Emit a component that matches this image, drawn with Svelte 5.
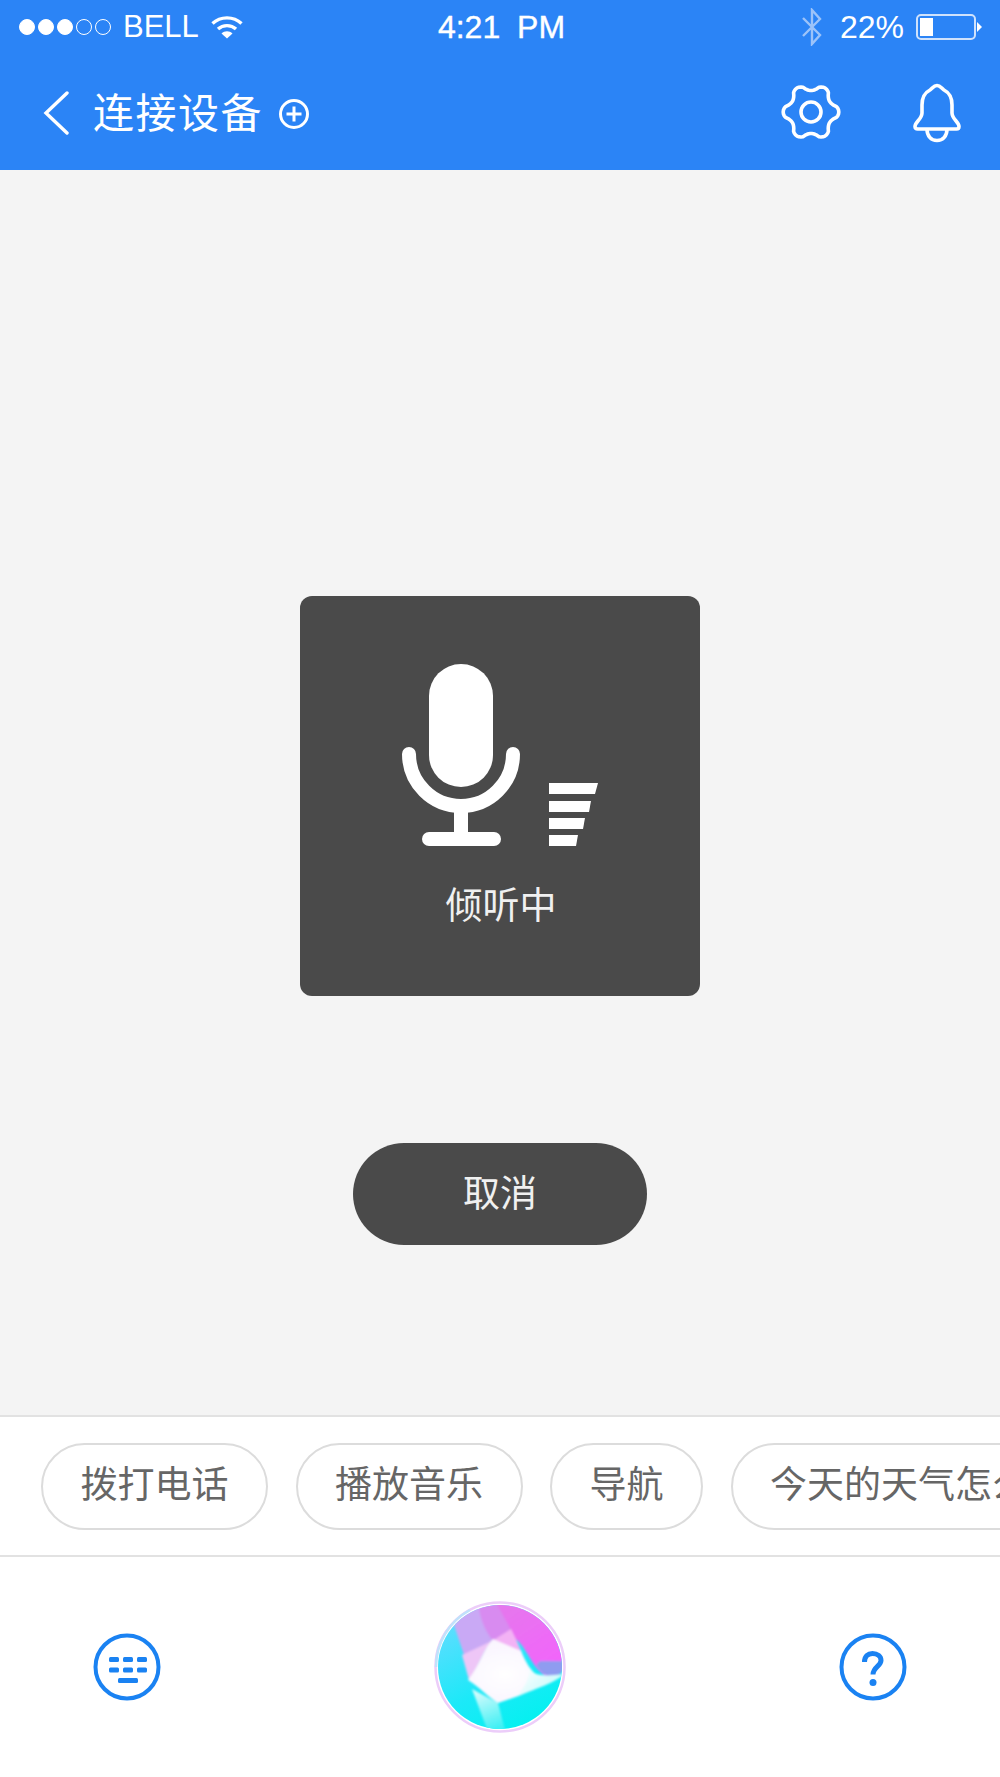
<script>
  const chips = ["拨打电话", "播放音乐", "导航", "今天的天气怎么样"];
  const dots = [1, 1, 1, 0, 0];

  // six rounded teeth: radius swings between the lobes and the notches
  function gearOutline(cx, cy, mean, swing) {
    const pts = [];
    for (let deg = 0; deg < 360; deg += 4) {
      const a = (deg * Math.PI) / 180;
      const wave = Math.cos(6 * a);
      const shaped = Math.sign(wave) * Math.pow(Math.abs(wave), 0.7);
      const r = mean + swing * shaped;
      pts.push(`${(cx + r * Math.cos(a)).toFixed(2)} ${(cy + r * Math.sin(a)).toFixed(2)}`);
    }
    return "M" + pts.join("L") + "Z";
  }
  const gearPath = gearOutline(30, 30, 24.6, 3.2);
</script>

<div class="phone">
  <header class="top">
    <div class="status">
      <div class="status-left">
        <div class="signal">
          {#each dots as on}
            <i class="dot" class:on></i>
          {/each}
        </div>
        <span class="carrier">BELL</span>
        <svg class="wifi" width="32" height="24" viewBox="0 0 32 24" fill="none" stroke="#fff" stroke-width="3.4">
          <path d="M1.5 8.5C9.5 1 22.5 1 30.5 8.5" />
          <path d="M7 14C12 9.5 20 9.5 25 14" />
          <path d="M16 23.5L10.5 18.5C13.5 15.6 18.5 15.6 21.5 18.5Z" fill="#fff" stroke="none" />
        </svg>
      </div>
      <div class="clock">4:21 PM</div>
      <div class="status-right">
        <svg class="bt" width="22" height="38" viewBox="0 0 22 38" fill="none" stroke="#9cc3f9" stroke-width="2.4">
          <path d="M2 10L19 27L11 36V2L19 11L2 28" />
        </svg>
        <span class="pct">22%</span>
        <div class="battery"><i></i></div>
        <i class="nub"></i>
      </div>
    </div>
    <div class="nav">
      <svg class="back" width="26" height="44" viewBox="0 0 26 44" fill="none" stroke="#fff" stroke-width="3.4" stroke-linecap="round">
        <path d="M24 2L3 22L24 42" />
      </svg>
      <span class="title">连接设备</span>
      <svg class="plus" width="32" height="32" viewBox="0 0 32 32" fill="none" stroke="#fff" stroke-width="3">
        <circle cx="16" cy="16" r="13.5" />
        <path d="M8.5 16H23.5M16 8.5V23.5" />
      </svg>
      <svg class="gear" width="60" height="60" viewBox="0 0 60 60" fill="none" stroke="#fff" stroke-width="3.6" stroke-linejoin="round">
        <path d={gearPath} />
        <circle cx="30" cy="30" r="10" />
      </svg>
      <svg class="bell" width="48" height="60" viewBox="0 0 48 60" fill="none" stroke="#fff" stroke-width="3.6" stroke-linejoin="round">
        <path d="M24 2.5C27.5 2.5 28.5 5.5 31 7C36 9.5 39 14.5 39 22V30C39 36 46 39 46 43.5C46 45.5 45 46 43.5 46H4.5C3 46 2 45.5 2 43.5C2 39 9 36 9 30V22C9 14.5 12 9.5 17 7C19.5 5.5 20.5 2.5 24 2.5Z" />
        <path d="M14 46C14 53 18 57.5 24 57.5C30 57.5 34 53 34 46" />
      </svg>
    </div>
  </header>

  <main class="content">
    <section class="listening">
      <div class="graphic">
        <svg width="196" height="182" viewBox="0 0 196 182" fill="none">
          <rect x="27" y="0" width="64" height="123" rx="32" fill="#fff" />
          <path d="M7 90A52 52 0 0 0 111 90" stroke="#fff" stroke-width="14" stroke-linecap="round" />
          <path d="M59 142V176" stroke="#fff" stroke-width="14" />
          <rect x="20" y="168" width="79" height="14" rx="7" fill="#fff" />
          <path d="M147 119H196L193 130H147Z" fill="#fff" />
          <path d="M147 137H189L187 148H147Z" fill="#fff" />
          <path d="M147 154H183L181 165H147Z" fill="#fff" />
          <path d="M147 171H176L174 182H147Z" fill="#fff" />
        </svg>
      </div>
      <p>倾听中</p>
    </section>
    <button class="cancel">取消</button>
  </main>

  <div class="chips">
    {#each chips as chip}
      <span class="chip">{chip}</span>
    {/each}
  </div>

  <footer class="dock">
    <svg width="68" height="68" viewBox="0 0 68 68" fill="none">
      <circle cx="34" cy="34" r="31.5" stroke="#1a82f2" stroke-width="4" />
      <g fill="#1a82f2">
        <rect x="16" y="24" width="10" height="5" rx="1.5" />
        <rect x="30" y="24" width="10" height="5" rx="1.5" />
        <rect x="44" y="24" width="10" height="5" rx="1.5" />
        <rect x="16" y="34.5" width="10" height="5" rx="1.5" />
        <rect x="30" y="34.5" width="10" height="5" rx="1.5" />
        <rect x="44" y="34.5" width="10" height="5" rx="1.5" />
        <rect x="25" y="45" width="20" height="5" rx="1.5" />
      </g>
    </svg>

    <svg class="orb" width="134" height="134" viewBox="33 21 134 134" fill="none">
      <defs>
        <clipPath id="orb-clip"><circle cx="100" cy="88" r="62" /></clipPath>
        <filter id="orb-soft" x="-5%" y="-5%" width="110%" height="110%">
          <feGaussianBlur stdDeviation="1.2" />
        </filter>
        <linearGradient id="orb-base" x1="0.2" y1="0.1" x2="0.7" y2="1">
          <stop offset="0" stop-color="#62dcff" />
          <stop offset="0.55" stop-color="#1ce9f8" />
          <stop offset="1" stop-color="#00f2ee" />
        </linearGradient>
        <linearGradient id="orb-pink" x1="0.1" y1="0" x2="0.8" y2="0.9">
          <stop offset="0" stop-color="#e27bea" />
          <stop offset="1" stop-color="#f264fb" />
        </linearGradient>
        <linearGradient id="orb-mist" x1="0" y1="0" x2="0.3" y2="1">
          <stop offset="0" stop-color="#e4fcfd" />
          <stop offset="1" stop-color="#3ff0f4" />
        </linearGradient>
        <linearGradient id="orb-fade" x1="0" y1="0" x2="1" y2="0.6">
          <stop offset="0" stop-color="#fff" />
          <stop offset="1" stop-color="#c4fafb" />
        </linearGradient>
        <radialGradient id="orb-white" cx="0.4" cy="0.55" r="0.7">
          <stop offset="0" stop-color="#fff" />
          <stop offset="1" stop-color="#f8f1fe" />
        </radialGradient>
      </defs>
      <circle cx="100" cy="88" r="64.5" stroke="#eccdf9" stroke-width="2.5" />
      <path d="M70 31A64.5 64.5 0 0 0 36 88" stroke="#bfe3fb" stroke-width="2.5" />
      <g clip-path="url(#orb-clip)">
        <rect x="30" y="20" width="140" height="140" fill="url(#orb-base)" />
        <g filter="url(#orb-soft)">
          <path d="M72 110L98 124L106 155L87 150Z" fill="url(#orb-mist)" />
          <path d="M76 18C90 30 102 50 118 62C128 72 133 90 146 97C154 100 162 92 170 82V18Z" fill="url(#orb-pink)" />
          <path d="M136 86C142 96 150 100 158 96C162 94 165 90 170 82L140 82Z" fill="#8f9cf0" />
          <path d="M54 46L64 76L94 62L80 26L70 24Z" fill="#c9a9f5" />
          <path d="M78 22H95C101 32 106 42 111 51L93 62C85 52 79 38 78 22Z" fill="#d88bf0" />
          <path d="M92 62L111 50C114 56 118 64 122 74Z" fill="#f3b2f5" />
          <path d="M62 76L94 61C84 68 80 86 69 101Z" fill="#eec6f7" />
          <path d="M93 60L121 72C126 84 131 92 138 97L160 97C140 109 120 117 98 124C88 118 78 107 68 101C80 86 84 69 93 60Z" fill="url(#orb-white)" />
          <path d="M129 90C134 96 142 98 165 95C152 105 138 109 118 116C126 106 130 98 129 90Z" fill="url(#orb-fade)" />
        </g>
      </g>
    </svg>

    <svg width="68" height="68" viewBox="0 0 68 68" fill="none">
      <circle cx="34" cy="34" r="31.5" stroke="#1a82f2" stroke-width="4" />
      <path d="M25.5 29C25.5 23 29 20.5 33.5 20.5C38.5 20.5 42 23.5 42 27.5C42 33 34 34 34 41.5" stroke="#1a82f2" stroke-width="5" />
      <circle cx="34" cy="49.5" r="3.5" fill="#1a82f2" />
    </svg>
  </footer>
</div>

<style>
  :global(body) {
    background: #fff;
  }
  .phone {
    width: 1000px;
    height: 1777px;
    display: flex;
    flex-direction: column;
    overflow: hidden;
    font-family: "Liberation Sans", "Noto Sans CJK SC", sans-serif;
  }
  .top {
    height: 170px;
    background: #2b84f6;
    color: #fff;
    flex: none;
  }
  .status {
    height: 54px;
    display: grid;
    grid-template-columns: 1fr auto 1fr;
    align-items: center;
    padding: 0 16px 0 19px;
    font-size: 31px;
  }
  .status-left,
  .status-right {
    display: flex;
    align-items: center;
  }
  .status-right {
    justify-content: flex-end;
    padding-right: 2px;
  }
  .signal {
    display: flex;
    gap: 3px;
  }
  .dot {
    width: 16px;
    height: 16px;
    box-sizing: border-box;
    border-radius: 50%;
    border: 1.5px solid #fff;
  }
  .dot.on {
    background: #fff;
  }
  .carrier {
    margin-left: 12px;
  }
  .wifi {
    margin-left: 12px;
  }
  .clock {
    font-size: 32px;
    word-spacing: 8px;
    -webkit-text-stroke: 0.4px #fff;
  }
  .bt {
    margin-right: 17px;
  }
  .pct {
    font-size: 32px;
  }
  .battery {
    width: 60px;
    height: 26px;
    box-sizing: border-box;
    margin-left: 12px;
    padding: 2px;
    border: 2px solid #cfe2fc;
    border-radius: 5px;
  }
  .battery i {
    display: block;
    width: 13px;
    height: 100%;
    background: #fff;
  }
  .nub {
    width: 0;
    height: 0;
    margin-left: 1px;
    border-left: 5px solid #fff;
    border-top: 5px solid transparent;
    border-bottom: 5px solid transparent;
  }
  .nav {
    height: 116px;
    display: flex;
    align-items: center;
    padding-left: 43px;
  }
  .title {
    margin-left: 24px;
    padding-top: 5px;
    font-size: 41px;
    line-height: 1;
    letter-spacing: 1.5px;
  }
  .plus {
    margin-left: 15px;
    margin-top: 3px;
  }
  .gear {
    margin-left: auto;
  }
  .back {
    margin-top: 2px;
  }
  .bell {
    margin: 2px 39px 0 72px;
  }
  .content {
    height: 1245px;
    box-sizing: border-box;
    flex: none;
    background: #f4f4f4;
    display: flex;
    flex-direction: column;
    align-items: center;
    padding-top: 426px;
  }
  .listening {
    width: 400px;
    height: 400px;
    box-sizing: border-box;
    padding-top: 68px;
    background: #4a4a4a;
    border-radius: 12px;
    color: #f0f0f0;
  }
  .graphic {
    display: flex;
    padding-left: 102px;
  }
  .listening p {
    margin: 39px 0 0;
    padding-left: 2px;
    text-align: center;
    font-size: 37px;
    line-height: 44px;
  }
  .cancel {
    width: 294px;
    height: 102px;
    margin-top: 147px;
    padding: 0 0 6px;
    border: 0;
    border-radius: 51px;
    background: #4a4a4a;
    color: #f0f0f0;
    font-family: inherit;
    font-size: 37px;
  }
  .chips {
    height: 142px;
    box-sizing: border-box;
    flex: none;
    display: flex;
    align-items: center;
    gap: 27.5px;
    padding-left: 41px;
    overflow: hidden;
    background: #fff;
    border-top: 2px solid #e2e2e2;
    border-bottom: 2px solid #e2e2e2;
  }
  .chip {
    flex: none;
    height: 87px;
    box-sizing: border-box;
    padding: 0 37.5px;
    border: 2.5px solid #dcdcdc;
    border-radius: 44px;
    color: #666;
    font-size: 37px;
    line-height: 82px;
    white-space: nowrap;
  }
  .dock {
    flex: 1;
    display: flex;
    align-items: center;
    justify-content: space-between;
    padding: 0 93px;
    background: #fff;
  }
</style>
